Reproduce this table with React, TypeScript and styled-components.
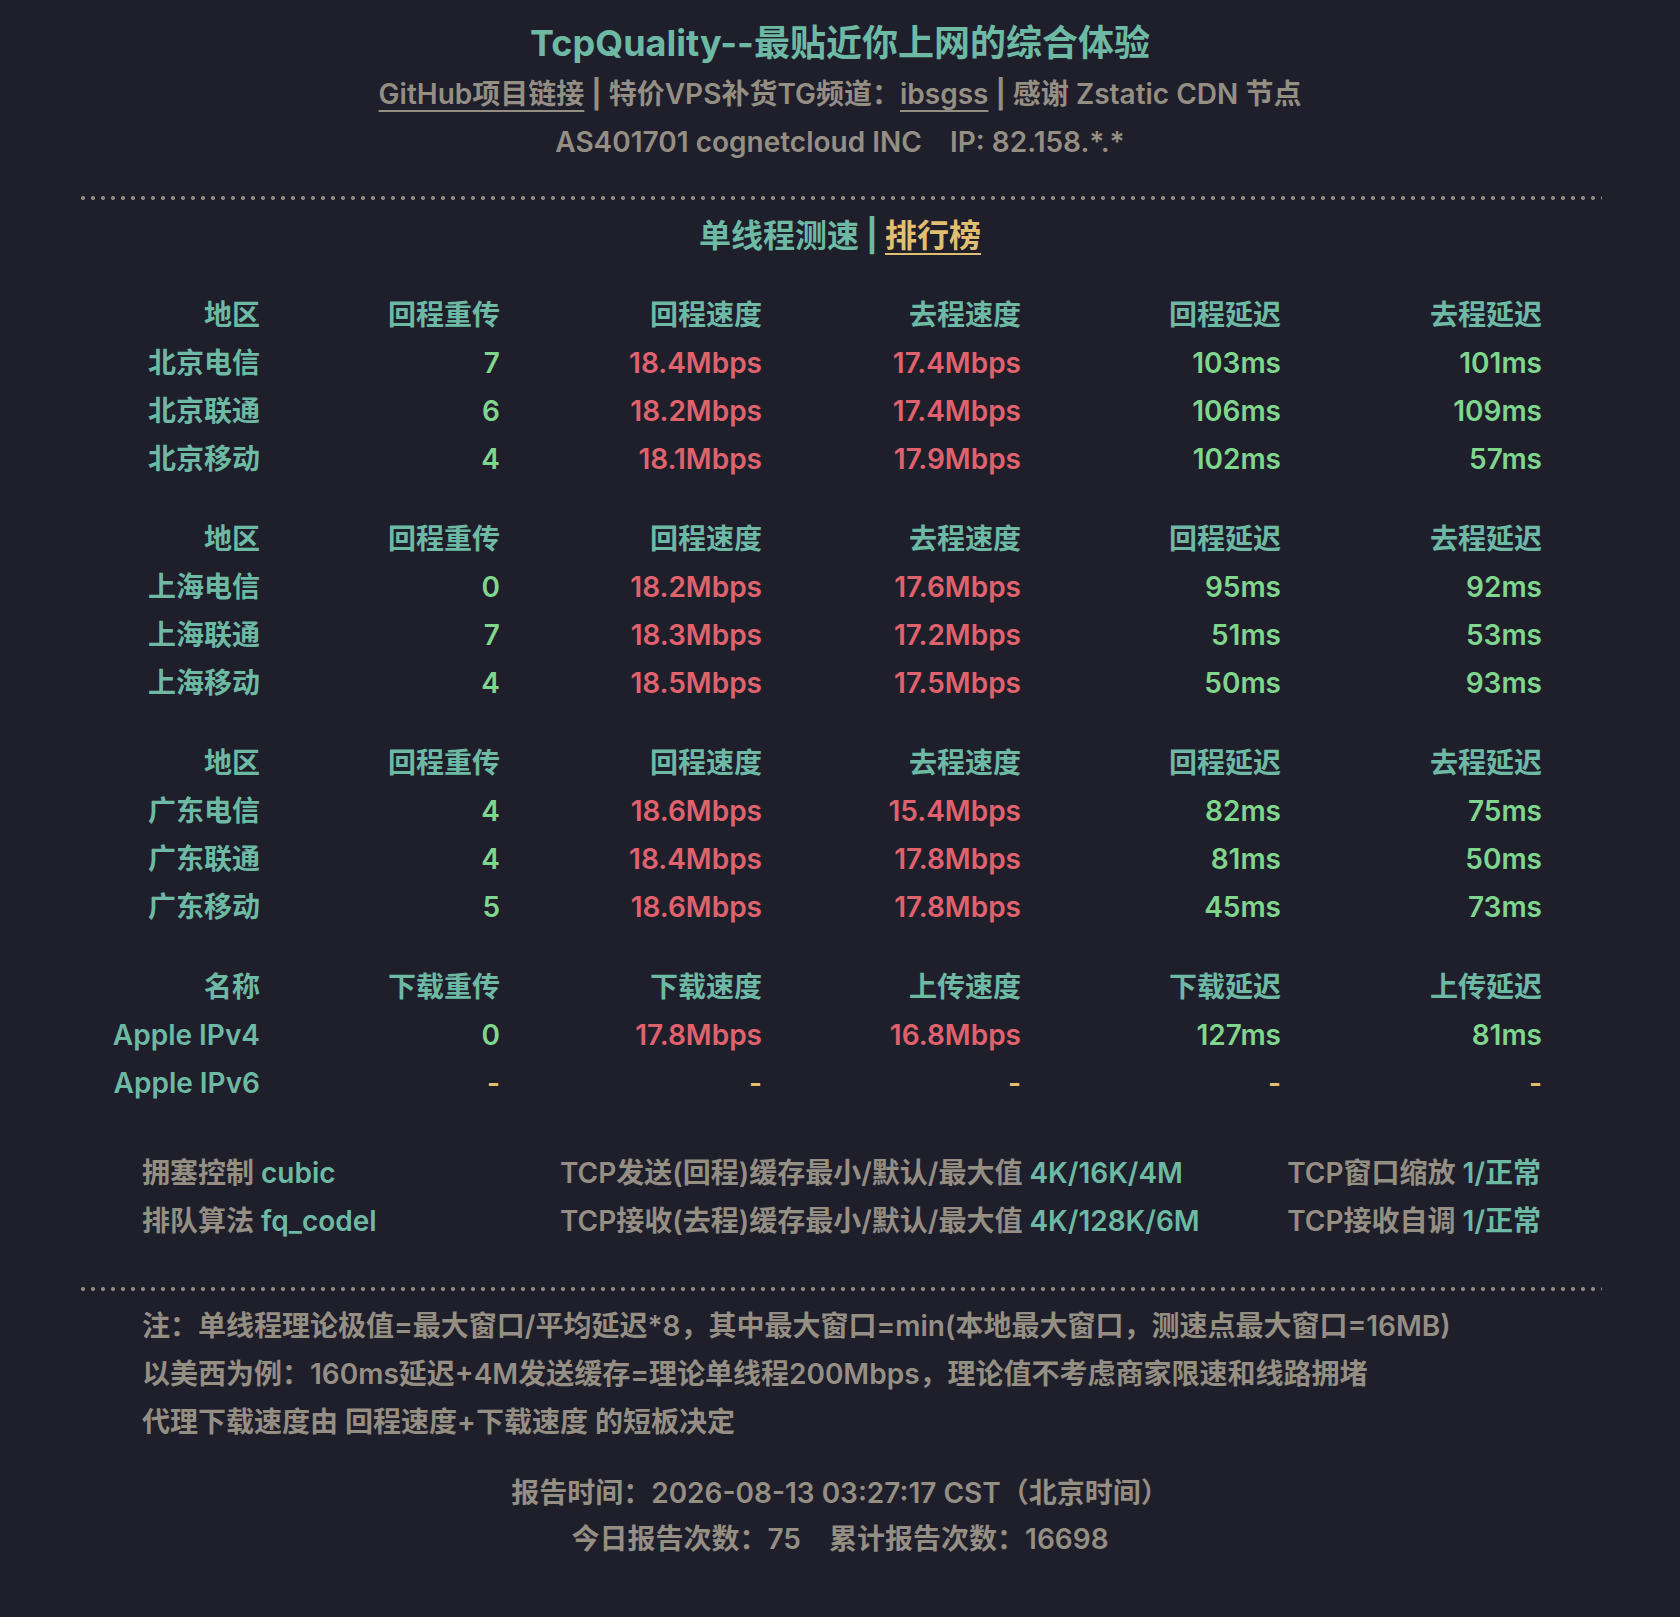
import React from "react";
import styled, { createGlobalStyle } from "styled-components";

const C = {
  bg: "#1f1f2c",
  teal: "#6db9a4",
  gray: "#958e83",
  red: "#e0626c",
  green: "#80d68c",
  yellow: "#e2be70",
  dots: "#8e877c",
};

const Global = createGlobalStyle`
  html, body { margin: 0; padding: 0; background: ${C.bg}; }
  body {
    font-family: "Inter", "Noto Sans CJK SC", sans-serif;
    font-weight: 600;
    color: ${C.gray};
  }
`;

const Page = styled.div`
  width: 1524px;
  margin: 0 auto;
  padding: 19px 0 55px;
  box-sizing: border-box;
  min-height: 1617px;
`;

const Title = styled.h1`
  margin: 0 0 3px;
  font-size: 36px;
  line-height: 48px;
  font-weight: 700;
  color: ${C.teal};
  text-align: center;
`;

const InfoLine = styled.div`
  font-size: 28px;
  line-height: 48px;
  color: ${C.gray};
  text-align: center;
  white-space: pre;
`;

const Link = styled.a<{ $color?: string }>`
  color: ${(p) => p.$color || C.gray};
  text-decoration: underline;
  text-decoration-thickness: 2px;
  text-underline-offset: 6px;
`;

const Bar = styled.span<{ $color?: string }>`
  color: ${(p) => p.$color || C.gray};
  font-weight: 700;
  padding: 0 7px;
`;

const Dotted = styled.div<{ $mt: number; $mb: number }>`
  height: 4px;
  margin: ${(p) => p.$mt}px 0 ${(p) => p.$mb}px;
  background-image: radial-gradient(circle, ${C.dots} 1.8px, transparent 2.3px);
  background-size: 10px 4px;
  background-repeat: repeat-x;
`;

const SectionTitle = styled.h2`
  margin: 0;
  font-size: 32px;
  line-height: 48px;
  font-weight: 700;
  color: ${C.teal};
  text-align: center;
`;

const Tables = styled.div`
  margin-top: 31px;
  display: flex;
  flex-direction: column;
  gap: 32px;
`;

const Grid = styled.div`
  display: grid;
  grid-template-columns: 182px 240px 262px 259px 260px 261px;
  grid-auto-rows: 48px;
`;

type Tone = "teal" | "green" | "red" | "yellow";

const Cell = styled.div<{ $tone: Tone }>`
  font-size: 28px;
  line-height: 48px;
  text-align: right;
  white-space: nowrap;
  color: ${(p) => C[p.$tone]};
`;

const Settings = styled.div`
  margin-top: 42px;
  padding: 0 61px 0 64px;
  display: grid;
  grid-template-columns: 418px 1fr auto;
  grid-auto-rows: 48px;
  font-size: 28px;
  line-height: 48px;
  white-space: nowrap;
`;

const Value = styled.span`
  color: ${C.teal};
`;

const Notes = styled.div`
  padding-left: 64px;
  font-size: 28px;
  line-height: 48px;
  color: ${C.gray};
  white-space: nowrap;
`;

const Footer = styled.div`
  margin-top: 24px;
  font-size: 28px;
  line-height: 46px;
  text-align: center;
  color: ${C.gray};
  white-space: pre;
`;

const groups: string[][][] = [
  [
    ["地区", "回程重传", "回程速度", "去程速度", "回程延迟", "去程延迟"],
    ["北京电信", "7", "18.4Mbps", "17.4Mbps", "103ms", "101ms"],
    ["北京联通", "6", "18.2Mbps", "17.4Mbps", "106ms", "109ms"],
    ["北京移动", "4", "18.1Mbps", "17.9Mbps", "102ms", "57ms"],
  ],
  [
    ["地区", "回程重传", "回程速度", "去程速度", "回程延迟", "去程延迟"],
    ["上海电信", "0", "18.2Mbps", "17.6Mbps", "95ms", "92ms"],
    ["上海联通", "7", "18.3Mbps", "17.2Mbps", "51ms", "53ms"],
    ["上海移动", "4", "18.5Mbps", "17.5Mbps", "50ms", "93ms"],
  ],
  [
    ["地区", "回程重传", "回程速度", "去程速度", "回程延迟", "去程延迟"],
    ["广东电信", "4", "18.6Mbps", "15.4Mbps", "82ms", "75ms"],
    ["广东联通", "4", "18.4Mbps", "17.8Mbps", "81ms", "50ms"],
    ["广东移动", "5", "18.6Mbps", "17.8Mbps", "45ms", "73ms"],
  ],
  [
    ["名称", "下载重传", "下载速度", "上传速度", "下载延迟", "上传延迟"],
    ["Apple IPv4", "0", "17.8Mbps", "16.8Mbps", "127ms", "81ms"],
    ["Apple IPv6", "-", "-", "-", "-", "-"],
  ],
];

const toneFor = (row: number, col: number, v: string): Tone => {
  if (row === 0 || col === 0) return "teal";
  if (v === "-") return "yellow";
  if (col === 2 || col === 3) return "red";
  return "green";
};

export default function App() {
  return (
    <>
      <Global />
      <Page>
        <Title>TcpQuality--最贴近你上网的综合体验</Title>
        <InfoLine>
          <Link href="#">GitHub项目链接</Link>
          <Bar>|</Bar>特价VPS补货TG频道：<Link href="#">ibsgss</Link>
          <Bar>|</Bar>感谢 Zstatic CDN 节点
        </InfoLine>
        <InfoLine>{"AS401701 cognetcloud INC    IP: 82.158.*.*"}</InfoLine>
        <Dotted $mt={30} $mb={12} />
        <SectionTitle>
          单线程测速<Bar $color={C.teal}>|</Bar>
          <Link href="#" $color={C.yellow}>
            排行榜
          </Link>
        </SectionTitle>
        <Tables>
          {groups.map((g, gi) => (
            <Grid key={gi}>
              {g.map((row, ri) =>
                row.map((v, ci) => (
                  <Cell key={`${ri}-${ci}`} $tone={toneFor(ri, ci, v)}>
                    {v}
                  </Cell>
                ))
              )}
            </Grid>
          ))}
        </Tables>
        <Settings>
          <div>
            拥塞控制 <Value>cubic</Value>
          </div>
          <div>
            TCP发送(回程)缓存最小/默认/最大值 <Value>4K/16K/4M</Value>
          </div>
          <div>
            TCP窗口缩放 <Value>1/正常</Value>
          </div>
          <div>
            排队算法 <Value>fq_codel</Value>
          </div>
          <div>
            TCP接收(去程)缓存最小/默认/最大值 <Value>4K/128K/6M</Value>
          </div>
          <div>
            TCP接收自调 <Value>1/正常</Value>
          </div>
        </Settings>
        <Dotted $mt={42} $mb={11} />
        <Notes>
          <div>注：单线程理论极值=最大窗口/平均延迟*8，其中最大窗口=min(本地最大窗口，测速点最大窗口=16MB)</div>
          <div>以美西为例：160ms延迟+4M发送缓存=理论单线程200Mbps，理论值不考虑商家限速和线路拥堵</div>
          <div>代理下载速度由 回程速度+下载速度 的短板决定</div>
        </Notes>
        <Footer>
          <div>报告时间：2026-08-13 03:27:17 CST（北京时间）</div>
          <div>{"今日报告次数：75    累计报告次数：16698"}</div>
        </Footer>
      </Page>
    </>
  );
}
